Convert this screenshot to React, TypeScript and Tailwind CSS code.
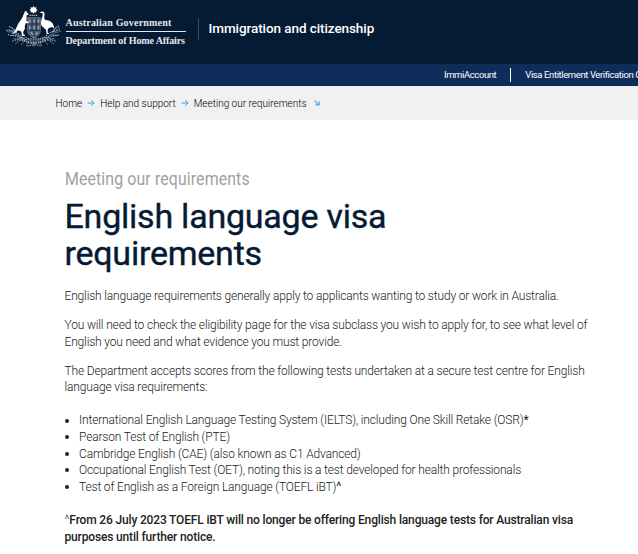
import { ReactNode } from 'react';

const tests: { name: string; mark?: string }[] = [
  {
    name: 'International English Language Testing System (IELTS), including One Skill Retake (OSR)',
    mark: '*',
  },
  { name: 'Pearson Test of English (PTE)' },
  { name: 'Cambridge English (CAE) (also known as C1 Advanced)' },
  {
    name: 'Occupational English Test (OET), noting this is a test developed for health professionals',
  },
  { name: 'Test of English as a Foreign Language (TOEFL iBT)', mark: '^' },
];

function Crest() {
  return (
    <svg
      viewBox="0 0 58 42"
      className="h-[42px] w-[58px] shrink-0"
      fill="none"
      stroke="#fff"
      aria-hidden="true"
    >
      {/* Commonwealth star and wreath */}
      <path
        d="M27.500 0l1 1.400 1.900-.2-.2 1.700 1.400 1-1.400 1 .2 1.700-1.900-.3-1 1.400-1-1.400-1.900.3.2-1.700-1.400-1 1.400-1-.2-1.700 1.900.2z"
        fill="#fff"
        stroke="none"
      />
      <path d="M23.500 9.300h8" strokeWidth="1" strokeDasharray="1.500 .6" opacity=".8" />
      {/* Shield */}
      <path
        d="M21.500 11.500h13v13c0 4-3.300 6-6.500 7.500-3.200-1.500-6.500-3.500-6.500-7.500z"
        fill="#4d5c73"
        stroke="#8a95a5"
        strokeWidth=".5"
      />
      <path
        d="M22 18h12.500M22 24.500h12.500M26 12v12.500M30.300 12v12.500M28 25v6"
        stroke="#152a45"
        strokeWidth=".7"
      />
      <path
        d="M23.800 13.500v3M28.100 13.500v3M32.500 13.500v3M23.800 20v3M28.100 20v3M32.500 20v3M25 26.500l2 2M31.500 26.500l-2 2"
        stroke="#aab2be"
        strokeWidth="1.200"
      />
      {/* Kangaroo */}
      <path
        d="M19 4.200l.8 2 .7-1.800.5 2.200 1.600 1.300-.3 1-1.800.3c.2 2 .2 3.600-.2 5.300l1.700 1.500 1.100-.4-.6 1.300-2.800.3-1 3.400.3 1.800-1.800 3.500.3 2.500 1.500.6-.2.900h-2.800l-.8-4.500-3-1.200c-1.500 1.800-3.800 3.200-6.500 3.700 2-1.500 3.800-3.700 5.200-7.400 1.200-3.800 4.100-6 5.600-9.300.8-2 1.200-3.400 1.900-4.500z"
        fill="#fff"
        stroke="none"
      />
      {/* Emu */}
      <path
        d="M33.500 7l2-1.400c1.700-.4 2.900.4 3 2.100.2 2.200-.8 4.300.2 5.900 1.300 1.200 4 .2 6.500 2.300 2 1.500 2.700 3.600 2.900 6.500l-2.200-1.500-3.300 1.300-1 1.800.4 3.300 1.500.8h-2.900l-.5-4-2.300-2.300c-2.400-1.600-3.100-3-2.800-5.500.2-3.100 2-5.300 1.700-8.700l-1-.6z"
        fill="#fff"
        stroke="none"
      />
      {/* Wattle branches */}
      <g strokeWidth=".6" opacity=".55">
        <path d="M1 25.500c5 .5 10 2.500 13.500 5.500s7.500 3.500 13.500 2.700c6 .8 10 .3 13.500-2.700s8.500-5 13.500-5.500" />
        <path d="M7 33c5-.5 7.500-2 11-2 4 .4 6 3.500 10 6 4-2.500 6-5.600 10-6 3.500 0 6 1.500 11 2" />
        <path d="M3 20c3 1.500 5 4 7 8M5 29.500l7-.5M2 23l5 3M11 34l5-3M9 38l7-5M15 39l5-6M20 40l3-5M53 19c-3 1.500-5 4-7 8M52 29.500l-7-.5M54 22l-5 4M46 34l-5-3M48 38l-7-5M42 39l-5-6M36 40l-3-5M28 33v8" />
      </g>
      <g strokeWidth="1.400" strokeLinecap="round" strokeDasharray=".1 2.300" opacity=".62">
        <path d="M1 24.500c6 0 11 2 14 6s8 2.500 12 1.500c5 1 10 2 13-2s8-5.500 15-6" />
        <path d="M2.500 28.500c5 2 8 .5 12 3.500s8.500 5 13.500 4c5 1 10-1 13.500-4s7-1.500 12-3.500" />
        <path d="M7 35c5-2.500 8-.5 12 0 3 1.500 6 3 9 2.500 3 .5 7-1 10-2.500s7-1.500 11 0" />
        <path d="M22 40c4-1.500 9-1.500 13 0" />
        <path d="M4 21c3 1 4 2 5.500 5M52.500 21c-3 1-4 2-5.500 5" />
      </g>
    </svg>
  );
}

function Arrow({ className }: { className: string }) {
  return (
    <svg viewBox="0 0 8 8" className={className} fill="none" stroke="#2ba6e0">
      <path d="M.5 4h6.500M4.200 1.200L7 4 4.200 6.800" />
    </svg>
  );
}

function Line({ children }: { children: ReactNode }) {
  return <span className="block whitespace-nowrap">{children}</span>;
}

export default function App() {
  return (
    <div className="h-[554px] w-[638px] overflow-hidden bg-white font-['Roboto',sans-serif]">
      <header className="flex h-16 bg-[#051a33] text-white">
        <div className="flex pl-1.5 pt-1.5">
          <Crest />
          <div className="ml-[1.500px] mt-[10px] w-[120px] font-['Liberation_Serif',serif] text-[10px] font-bold leading-[14px] text-white/90">
            <div className="whitespace-nowrap border-b border-white/90 pb-px tracking-[0.190px]">
              Australian Government
            </div>
            <div className="whitespace-nowrap pt-[2px] tracking-[-0.120px]">
              Department of Home Affairs
            </div>
          </div>
        </div>
        <div className="ml-3 mt-[18px] h-[22px] whitespace-nowrap border-l border-[#3c4c61] pl-2.5 text-[13.500px] font-medium leading-[21px] tracking-[-0.080px]">
          Immigration and citizenship
        </div>
      </header>

      <nav className="flex h-[22px] items-center bg-[#0f2d5b] pl-[444px] text-[9.500px] tracking-[-0.400px] text-white">
        <a className="whitespace-nowrap">ImmiAccount</a>
        <a className="ml-3.5 whitespace-nowrap border-l border-white pl-3.5">
          Visa Entitlement Verification C
        </a>
      </nav>

      <div className="flex h-[34px] items-center bg-[#f1f1f1] pl-[55.500px] text-[10px] font-light text-black">
        <span>Home</span>
        <Arrow className="mx-[5px] size-2" />
        <span>Help and support</span>
        <Arrow className="mx-[5px] size-2" />
        <span>Meeting our requirements</span>
        <Arrow className="ml-1.5 size-2 rotate-45" />
      </div>

      <main className="pl-[64.500px] pt-[46px] text-[12px] font-light leading-[16.600px] tracking-[-0.160px] text-[#222]">
        <p className="origin-left scale-x-[0.880] text-[18px] font-normal leading-[26px] tracking-[0.150px] text-[#a0a0a0]">
          Meeting our requirements
        </p>
        <h1 className="mt-1.5 text-[34px] font-normal leading-[37px] tracking-[-0.230px] text-[#051a33] [-webkit-text-stroke:0.4px_#051a33]">
          <Line>English language visa</Line>
          <Line>requirements</Line>
        </h1>
        <p className="mt-[16px]">
          <Line>
            English language requirements generally apply to applicants wanting
            to study or work in Australia.
          </Line>
        </p>
        <p className="mt-[12.500px]">
          <Line>
            You will need to check the eligibility page for the visa subclass
            you wish to apply for, to see what level of
          </Line>
          <Line>English you need and what evidence you must provide.</Line>
        </p>
        <p className="mt-[12.500px]">
          <Line>
            The Department accepts scores from the following tests undertaken at
            a secure test centre for English
          </Line>
          <Line>language visa requirements:</Line>
        </p>
        <ul className="mt-[16.400px]">
          {tests.map(test => (
            <li key={test.name} className="flex items-center whitespace-nowrap">
              <span className="mr-[10.500px] size-1 rounded-full bg-[#222]" />
              {test.name}
              {test.mark && <b className="font-normal">{test.mark}</b>}
            </li>
          ))}
        </ul>
        <p className="mt-[16.600px] font-medium">
          <Line>
            <span className="font-light">^</span>From 26 July 2023 TOEFL iBT
            will no longer be offering English language tests for Australian
            visa
          </Line>
          <Line>purposes until further notice.</Line>
        </p>
      </main>
    </div>
  );
}
